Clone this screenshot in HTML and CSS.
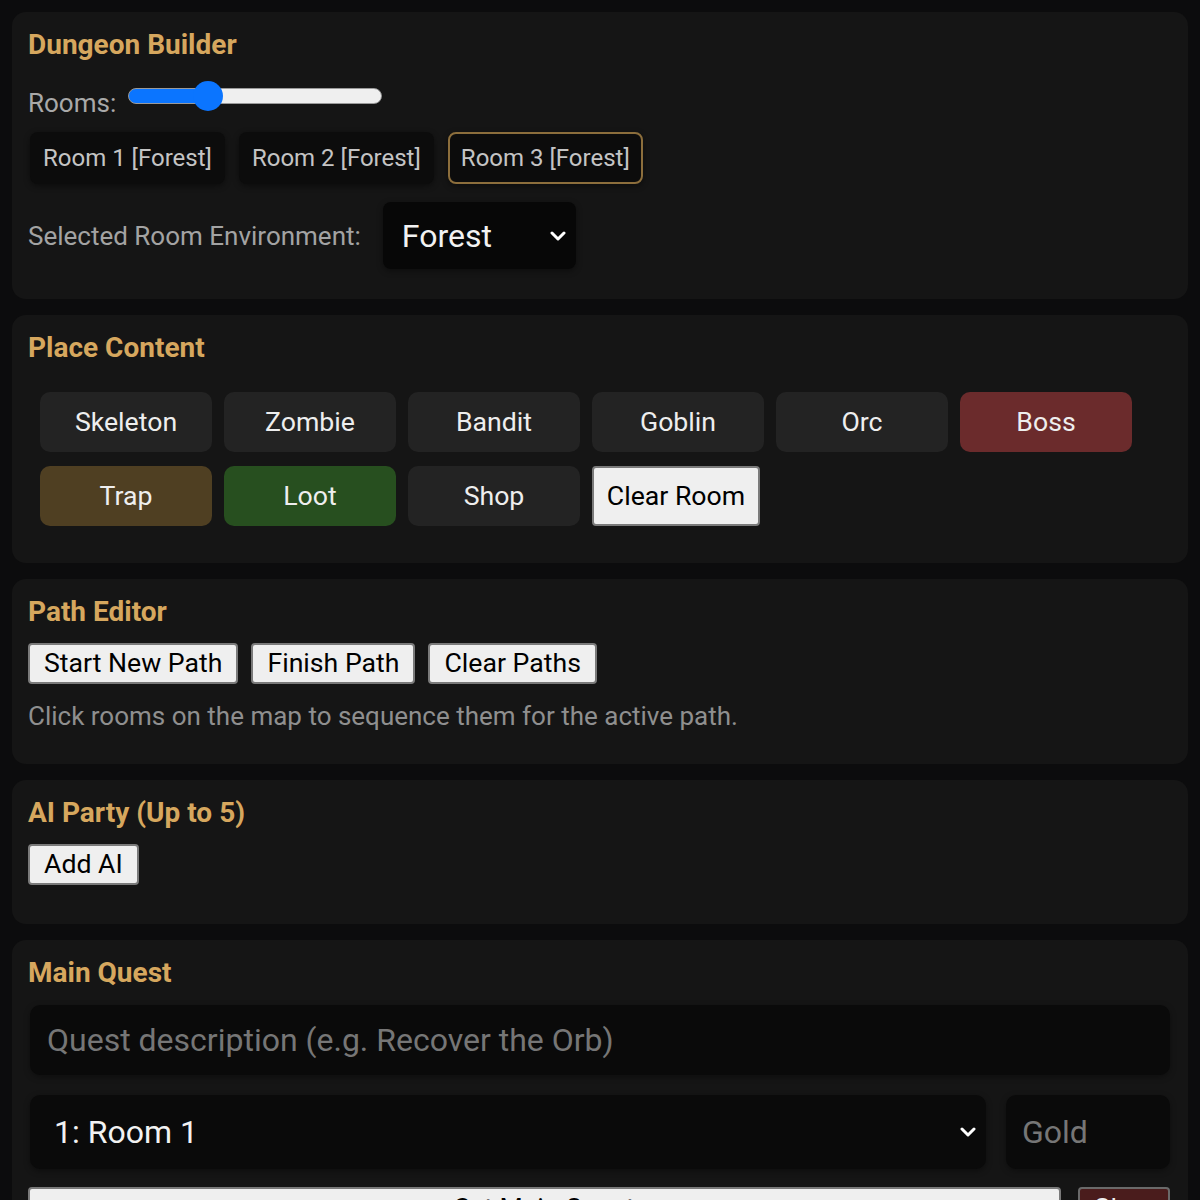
FILE: index.html
```html
<!DOCTYPE html>
<html lang="en">
<head>
    <meta charset="UTF-8">
    <meta name="viewport" content="width=device-width, initial-scale=1.0">
    <title>Dungeon Builder</title>
    <link rel="stylesheet" href="styles.css">
</head>
<body>
    <div class="sidebar">
        <!-- 地城設定 -->
        <section class="panel builder">
            <h2>Dungeon Builder</h2>

            <div class="rooms-row">
                <label for="room_count">Rooms:</label>
                <input type="range" id="room_count" class="room-slider" min="1" max="8" value="3" style="--fill: 31%">
            </div>

            <div class="room-list">
                <button class="room-btn">Room 1 [Forest]</button>
                <button class="room-btn">Room 2 [Forest]</button>
                <button class="room-btn selected">Room 3 [Forest]</button>
            </div>

            <div class="env-row">
                <label for="env_select">Selected Room Environment:</label>
                <div class="select-wrap env-select">
                    <select id="env_select">
                        <option>Forest</option>
                        <option>Cave</option>
                        <option>Crypt</option>
                        <option>Castle</option>
                    </select>
                    <svg class="chevron" viewBox="0 0 16 10" width="16" height="10"><path d="M2 2 L8 8 L14 2" fill="none" stroke="#fff" stroke-width="3" stroke-linecap="round" stroke-linejoin="round"/></svg>
                </div>
            </div>
        </section>

        <!-- 放置內容 -->
        <section class="panel content">
            <h2>Place Content</h2>
            <div class="content-grid">
                <button class="content-btn">Skeleton</button>
                <button class="content-btn">Zombie</button>
                <button class="content-btn">Bandit</button>
                <button class="content-btn">Goblin</button>
                <button class="content-btn">Orc</button>
                <button class="content-btn boss">Boss</button>
                <button class="content-btn trap">Trap</button>
                <button class="content-btn loot">Loot</button>
                <button class="content-btn">Shop</button>
                <button class="plain-btn clear-room">Clear Room</button>
            </div>
        </section>

        <!-- 路徑編輯 -->
        <section class="panel paths">
            <h2>Path Editor</h2>
            <div class="btn-row">
                <button class="plain-btn">Start New Path</button>
                <button class="plain-btn">Finish Path</button>
                <button class="plain-btn">Clear Paths</button>
            </div>
            <p class="hint">Click rooms on the map to sequence them for the active path.</p>
        </section>

        <!-- AI 隊伍 -->
        <section class="panel party">
            <h2>AI Party (Up to 5)</h2>
            <div class="btn-row">
                <button class="plain-btn">Add AI</button>
            </div>
        </section>

        <!-- 主線任務 -->
        <section class="panel quest">
            <h2>Main Quest</h2>
            <input type="text" class="field quest-desc" placeholder="Quest description (e.g. Recover the Orb)">
            <div class="quest-row">
                <div class="select-wrap room-select">
                    <select>
                        <option>1: Room 1</option>
                        <option>2: Room 2</option>
                        <option>3: Room 3</option>
                    </select>
                    <svg class="chevron" viewBox="0 0 16 10" width="16" height="10"><path d="M2 2 L8 8 L14 2" fill="none" stroke="#fff" stroke-width="3" stroke-linecap="round" stroke-linejoin="round"/></svg>
                </div>
                <input type="number" class="field gold" placeholder="Gold">
            </div>
            <div class="quest-actions">
                <button class="plain-btn set-quest">Set Main Quest</button>
                <button class="danger-btn">Clear</button>
            </div>
        </section>
    </div>
</body>
</html>
```

FILE: styles.css
```css
body {
    margin: 0;
    background-color: #0c0c0d;
    font-family: Roboto, "Noto Sans", Arial, sans-serif;
    color: #eee;
}

.sidebar {
    padding: 12px;
    display: flex;
    flex-direction: column;
    gap: 16px;
}

.panel {
    background-color: #151515;
    border-radius: 14px;
    padding: 16px;
}

h2 {
    margin: 0;
    font-size: 28px;
    line-height: 33px;
    font-weight: 700;
    color: #d6a75e;
}

button {
    font-family: inherit;
    cursor: pointer;
}

/* Dungeon Builder */
.rooms-row {
    display: flex;
    align-items: flex-start;
    gap: 12px;
    height: 30px;
    margin-top: 20px;
}

.rooms-row label {
    font-size: 26px;
    line-height: 30px;
    color: #a9a9a9;
    margin-top: 7px;
}

.room-slider {
    -webkit-appearance: none;
    appearance: none;
    width: 254px;
    height: 30px;
    margin: 0;
    background: transparent;
}

.room-slider::-webkit-slider-runnable-track {
    height: 16px;
    border-radius: 8px;
    box-sizing: border-box;
    border: 1px solid #9a9a9a;
    background: linear-gradient(to right, #0b75ff 0, #0b75ff var(--fill), #efefef var(--fill));
}

.room-slider::-webkit-slider-thumb {
    -webkit-appearance: none;
    width: 30px;
    height: 30px;
    margin-top: -8px;
    border-radius: 50%;
    background: #0b75ff;
    border: none;
}

.room-list {
    display: flex;
    gap: 14px;
    margin-top: 21px;
    padding-left: 2px;
}

.room-btn {
    background-color: #0c0c0c;
    color: #c4c4c4;
    font-size: 24px;
    line-height: 28px;
    padding: 10px 11px;
    border: 2px solid transparent;
    border-radius: 8px;
    box-shadow: 0 2px 6px rgba(0,0,0,0.45);
}

.room-btn.selected {
    border-color: #8c6e3c;
}

.env-row {
    display: flex;
    align-items: center;
    gap: 22px;
    margin-top: 18px;
    margin-bottom: 14px;
}

.env-row label {
    font-size: 26px;
    color: #a3a3a3;
}

.select-wrap {
    position: relative;
}

.select-wrap select {
    -webkit-appearance: none;
    appearance: none;
    width: 100%;
    height: 100%;
    background-color: #070707;
    color: #f2f2f2;
    font-family: inherit;
    font-size: 32px;
    border: none;
    border-radius: 8px;
    box-shadow: 0 2px 6px rgba(0,0,0,0.4);
    outline: none;
}

.chevron {
    position: absolute;
    top: 50%;
    right: 10px;
    margin-top: -5px;
    pointer-events: none;
}

.env-select {
    width: 193px;
    height: 67px;
}

.env-select select {
    padding-left: 19px;
}

/* Place Content */
.content-grid {
    display: flex;
    flex-wrap: wrap;
    column-gap: 12px;
    row-gap: 14px;
    margin-top: 16px;
    padding: 12px 12px 21px;
}

.content-btn {
    width: 172px;
    height: 60px;
    background-color: #232323;
    color: #eee;
    font-size: 26.67px;
    border: none;
    border-radius: 10px;
}

.content-btn.boss {
    background-color: #6b2b2c;
}

.content-btn.trap {
    background-color: #4f3f22;
}

.content-btn.loot {
    background-color: #274f1f;
}

.plain-btn {
    background-color: #efefef;
    color: #000;
    font-size: 26.67px;
    line-height: 31px;
    padding: 3px 14px;
    border: 2px solid #7a7a7a;
    border-radius: 4px;
}

.plain-btn.clear-room {
    width: 168px;
    height: 60px;
    padding: 0;
}

/* Path Editor / AI Party */
.btn-row {
    display: flex;
    gap: 13px;
    margin-top: 15px;
}

.hint {
    margin: 17px 0;
    font-size: 26px;
    line-height: 30px;
    color: #8f8f8f;
}

.party .btn-row {
    margin-bottom: 23px;
}

/* Main Quest */
.field {
    box-sizing: border-box;
    background-color: #0a0a0a;
    color: #eee;
    font-family: inherit;
    font-size: 32px;
    border: none;
    border-radius: 10px;
    outline: none;
    box-shadow: 0 2px 6px rgba(0,0,0,0.35);
}

.field::placeholder {
    color: #767676;
}

.quest-desc {
    display: block;
    width: calc(100% - 4px);
    height: 70px;
    margin: 16px 2px 0;
    padding: 0 17px;
}

.quest-row {
    display: flex;
    gap: 20px;
    margin: 20px 2px 0;
}

.room-select {
    flex: 1;
    height: 74px;
}

.room-select select {
    background-color: #0a0a0a;
    border-radius: 10px;
    padding-left: 24px;
}

.gold {
    width: 164px;
    height: 74px;
    padding: 0 16px;
}

.quest-actions {
    display: flex;
    gap: 17px;
    margin-top: 18px;
}

.set-quest {
    width: 1033px;
    height: 42px;
}

.danger-btn {
    width: 92px;
    height: 42px;
    background-color: #4a1c1c;
    color: #eee;
    font-size: 26.67px;
    border: 2px solid #6a6a6a;
    border-radius: 4px;
}
```
